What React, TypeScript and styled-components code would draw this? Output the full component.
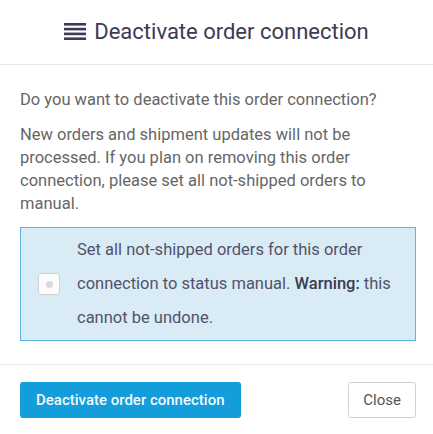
import React from 'react'
import styled, { createGlobalStyle } from 'styled-components'

const GlobalStyle = createGlobalStyle`
  html, body {
    margin: 0;
    padding: 0;
    background: #ffffff;
  }
  body {
    font-family: Roboto, 'Liberation Sans', Arial, sans-serif;
  }
  * {
    box-sizing: border-box;
  }
`

const ListIcon: React.FC = () => (
  <svg width="22" height="17" viewBox="0 0 22 17" aria-hidden="true">
    <rect x="0" y="0" width="22" height="2.6" fill="#3b3b55" />
    <rect x="0" y="4.8" width="22" height="2.6" fill="#3b3b55" />
    <rect x="0" y="9.6" width="22" height="2.6" fill="#3b3b55" />
    <rect x="0" y="14.4" width="22" height="2.6" fill="#3b3b55" />
  </svg>
)

const App: React.FC = () => {
  return (
    <>
      <GlobalStyle />
      <Modal>
        <Header>
          <ListIcon />
          <Title>Deactivate order connection</Title>
        </Header>
        <Body>
          <Text>Do you want to deactivate this order connection?</Text>
          <Text>
            New orders and shipment updates will not be processed. If you plan
            on removing this order connection, please set all not-shipped
            orders to manual.
          </Text>
          <Notice>
            <Checkbox>
              <Dot />
            </Checkbox>
            <NoticeText>
              Set all not-shipped orders for this order connection to status
              manual. <strong>Warning:</strong> this cannot be undone.
            </NoticeText>
          </Notice>
        </Body>
        <Footer>
          <PrimaryButton>Deactivate order connection</PrimaryButton>
          <SecondaryButton>Close</SecondaryButton>
        </Footer>
      </Modal>
    </>
  )
}

export default App

const Modal = styled.div`
  width: 433px;
  height: 434px;
  background: #fff;
  display: flex;
  flex-direction: column;
`
const Header = styled.div`
  height: 65px;
  flex: none;
  border-bottom: 1px solid #e6e6e6;
  display: flex;
  align-items: center;
  justify-content: center;
  gap: 8px;
  padding-bottom: 1px;
`
const Title = styled.h2`
  margin: 0;
  font-size: 22px;
  font-weight: 400;
  color: #3b3b52;
`
const Body = styled.div`
  padding: 23px 17px 23px 20px;
  border-bottom: 1px solid #e6e6e6;
`
const Text = styled.p`
  margin: 0 0 12px;
  font-size: 16.5px;
  line-height: 23px;
  color: #666;
`
const Notice = styled.div`
  margin-top: 4px;
  display: flex;
  align-items: center;
  gap: 17px;
  padding: 5px 10px 5px 17px;
  background: #d9ecf6;
  border: 1px solid #5bb6e3;
`
const Checkbox = styled.span`
  flex: none;
  width: 22px;
  height: 22px;
  border-radius: 3px;
  border: 1px solid #d2d2d6;
  background: #fcfcfc;
  display: flex;
  align-items: center;
  justify-content: center;
`
const Dot = styled.span`
  width: 7px;
  height: 7px;
  border-radius: 50%;
  background: #d9d9d9;
`
const NoticeText = styled.div`
  font-size: 16.5px;
  line-height: 34px;
  color: #52526a;

  strong {
    font-weight: 500;
    color: #3b3b52;
  }
`
const Footer = styled.div`
  display: flex;
  justify-content: space-between;
  align-items: flex-start;
  padding: 17px 17px 0 20px;
`
const PrimaryButton = styled.button`
  height: 36px;
  padding: 0 16px;
  border: none;
  border-radius: 3px;
  background: #139dda;
  color: #f2f8fc;
  font-family: Roboto, 'Liberation Sans', Arial, sans-serif;
  font-size: 15px;
  font-weight: 500;
`
const SecondaryButton = styled.button`
  height: 36px;
  padding: 0 14px;
  border: 1px solid #cfcfd4;
  border-radius: 3px;
  background: #fff;
  color: #555;
  font-family: Roboto, 'Liberation Sans', Arial, sans-serif;
  font-size: 15px;
  font-weight: 400;
`
